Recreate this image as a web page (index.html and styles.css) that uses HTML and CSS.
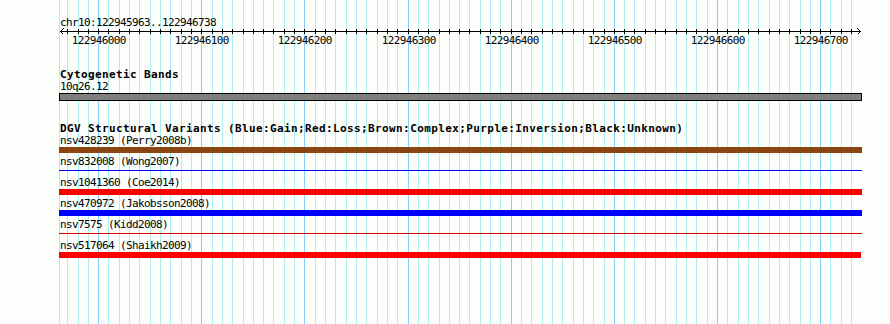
FILE: index.html
```html
<!DOCTYPE html>
<html>
<head>
<meta charset="utf-8">
<link rel="stylesheet" href="styles.css">
</head>
<body>
<div class="panel">
  <svg class="grid" width="890" height="324" shape-rendering="crispEdges">
    <path class="minor" d="M59.5 0V324M67.5 0V324M78.5 0V324M88.5 0V324M108.5 0V324M119.5 0V324M129.5 0V324M139.5 0V324M150.5 0V324M160.5 0V324M170.5 0V324M181.5 0V324M191.5 0V324M212.5 0V324M222.5 0V324M232.5 0V324M243.5 0V324M253.5 0V324M263.5 0V324M273.5 0V324M284.5 0V324M294.5 0V324M315.5 0V324M325.5 0V324M335.5 0V324M346.5 0V324M356.5 0V324M366.5 0V324M377.5 0V324M387.5 0V324M397.5 0V324M418.5 0V324M428.5 0V324M439.5 0V324M449.5 0V324M459.5 0V324M469.5 0V324M480.5 0V324M490.5 0V324M500.5 0V324M521.5 0V324M531.5 0V324M542.5 0V324M552.5 0V324M562.5 0V324M573.5 0V324M583.5 0V324M593.5 0V324M604.5 0V324M624.5 0V324M634.5 0V324M645.5 0V324M655.5 0V324M665.5 0V324M676.5 0V324M686.5 0V324M696.5 0V324M707.5 0V324M727.5 0V324M738.5 0V324M748.5 0V324M758.5 0V324M769.5 0V324M779.5 0V324M789.5 0V324M800.5 0V324M810.5 0V324M830.5 0V324M841.5 0V324M851.5 0V324"/>
    <path class="major" d="M98.5 0V324M201.5 0V324M304.5 0V324M408.5 0V324M511.5 0V324M614.5 0V324M717.5 0V324M820.5 0V324"/>
  </svg>

  <div class="content">
    <div class="pos">chr10:122945963..122946738</div>
    <svg class="ruler" width="890" height="21" shape-rendering="crispEdges">
      <rect x="60" y="3" width="801" height="1" fill="#000"/>
      <path class="ticks" d="M67.5 1V6M78.5 1V6M88.5 1V6M98.5 1V6M108.5 1V6M119.5 1V6M129.5 1V6M139.5 1V6M150.5 1V6M160.5 1V6M170.5 1V6M181.5 1V6M191.5 1V6M201.5 1V6M212.5 1V6M222.5 1V6M232.5 1V6M243.5 1V6M253.5 1V6M263.5 1V6M273.5 1V6M284.5 1V6M294.5 1V6M304.5 1V6M315.5 1V6M325.5 1V6M335.5 1V6M346.5 1V6M356.5 1V6M366.5 1V6M377.5 1V6M387.5 1V6M397.5 1V6M408.5 1V6M418.5 1V6M428.5 1V6M439.5 1V6M449.5 1V6M459.5 1V6M469.5 1V6M480.5 1V6M490.5 1V6M500.5 1V6M511.5 1V6M521.5 1V6M531.5 1V6M542.5 1V6M552.5 1V6M562.5 1V6M573.5 1V6M583.5 1V6M593.5 1V6M604.5 1V6M614.5 1V6M624.5 1V6M634.5 1V6M645.5 1V6M655.5 1V6M665.5 1V6M676.5 1V6M686.5 1V6M696.5 1V6M707.5 1V6M717.5 1V6M727.5 1V6M738.5 1V6M748.5 1V6M758.5 1V6M769.5 1V6M779.5 1V6M789.5 1V6M800.5 1V6M810.5 1V6M820.5 1V6M830.5 1V6M841.5 1V6M851.5 1V6"/>
      <path class="arrow" d="M63.5 0.5L60.5 3.5L63.5 6.5M857.5 0.5L860.5 3.5L857.5 6.5"/>
      <text class="tick-label" x="98.8" y="16">122946000</text>
      <text class="tick-label" x="201.8" y="16">122946100</text>
      <text class="tick-label" x="304.8" y="16">122946200</text>
      <text class="tick-label" x="408.8" y="16">122946300</text>
      <text class="tick-label" x="511.8" y="16">122946400</text>
      <text class="tick-label" x="614.8" y="16">122946500</text>
      <text class="tick-label" x="717.8" y="16">122946600</text>
      <text class="tick-label" x="820.8" y="16">122946700</text>
    </svg>

    <section class="track cyto">
      <div class="track-title">Cytogenetic Bands</div>
      <div class="band-label">10q26.12</div>
      <div class="band"></div>
    </section>

    <section class="track dgv">
      <div class="track-title">DGV Structural Variants (Blue:Gain;Red:Loss;Brown:Complex;Purple:Inversion;Black:Unknown)</div>
      <div class="row">
        <div class="label">nsv428239 (Perry2008b)</div>
        <div class="bar brown"></div>
      </div>
      <div class="row">
        <div class="label">nsv832008 (Wong2007)</div>
        <div class="bar thin blue"></div>
      </div>
      <div class="row">
        <div class="label">nsv1041360 (Coe2014)</div>
        <div class="bar red"></div>
      </div>
      <div class="row">
        <div class="label">nsv470972 (Jakobsson2008)</div>
        <div class="bar blue"></div>
      </div>
      <div class="row">
        <div class="label">nsv7575 (Kidd2008)</div>
        <div class="bar thin red-thin"></div>
      </div>
      <div class="row">
        <div class="label">nsv517064 (Shaikh2009)</div>
        <div class="bar red short"></div>
      </div>
    </section>
  </div>
</div>
</body>
</html>
```

FILE: styles.css
```css
html, body {
  margin: 0;
  padding: 0;
  background: #fcfefc;
}

.panel {
  position: relative;
  width: 890px;
  height: 324px;
  overflow: hidden;
  background: #fcfefc;
  color: #000;
  font-family: "DejaVu Sans Mono", monospace;
  font-size: 11px;
  letter-spacing: -0.62px;
}

.grid {
  position: absolute;
  left: 0;
  top: 0;
  z-index: 0;
}

.grid .minor {
  stroke: #afeeee;
  stroke-width: 1;
  fill: none;
}

.grid .major {
  stroke: #87cefa;
  stroke-width: 1;
  fill: none;
}

.content {
  position: relative;
  z-index: 1;
  display: flex;
  flex-direction: column;
}

.pos {
  margin-top: 17px;
  margin-left: 60px;
  line-height: 11px;
  height: 11px;
  white-space: nowrap;
}

.ruler {
  display: block;
}

.ruler .ticks,
.ruler .arrow {
  stroke: #000;
  stroke-width: 1;
  fill: none;
}

.tick-label {
  font-family: "DejaVu Sans Mono", monospace;
  font-size: 11px;
  letter-spacing: -0.62px;
  text-anchor: middle;
  fill: #000;
}

.track {
  display: flex;
  flex-direction: column;
  padding-left: 59px;
}

.cyto {
  margin-top: 19px;
}

.dgv {
  margin-top: 21px;
}

.track-title {
  margin-left: 1px;
  font-weight: bold;
  letter-spacing: 0.38px;
  line-height: 13px;
  height: 13px;
  white-space: nowrap;
}

.band-label,
.label {
  margin-left: 1px;
  line-height: 11px;
  height: 11px;
  white-space: nowrap;
}

.band {
  margin-top: 1px;
  width: 803px;
  height: 8px;
  box-sizing: border-box;
  border: 1px solid #000;
  background: #808080;
}

.row {
  display: flex;
  flex-direction: column;
}

.bar {
  width: 803px;
  height: 6px;
  margin-top: 1px;
  margin-bottom: 3px;
}

.bar.thin {
  height: 1px;
  margin-top: 3px;
  margin-bottom: 6px;
}

.bar.short {
  width: 802px;
}

.brown { background: #8b4513; }
.red { background: #ff0000; }
.blue { background: #0000ff; }
.red-thin { background: #d80000; }
```
